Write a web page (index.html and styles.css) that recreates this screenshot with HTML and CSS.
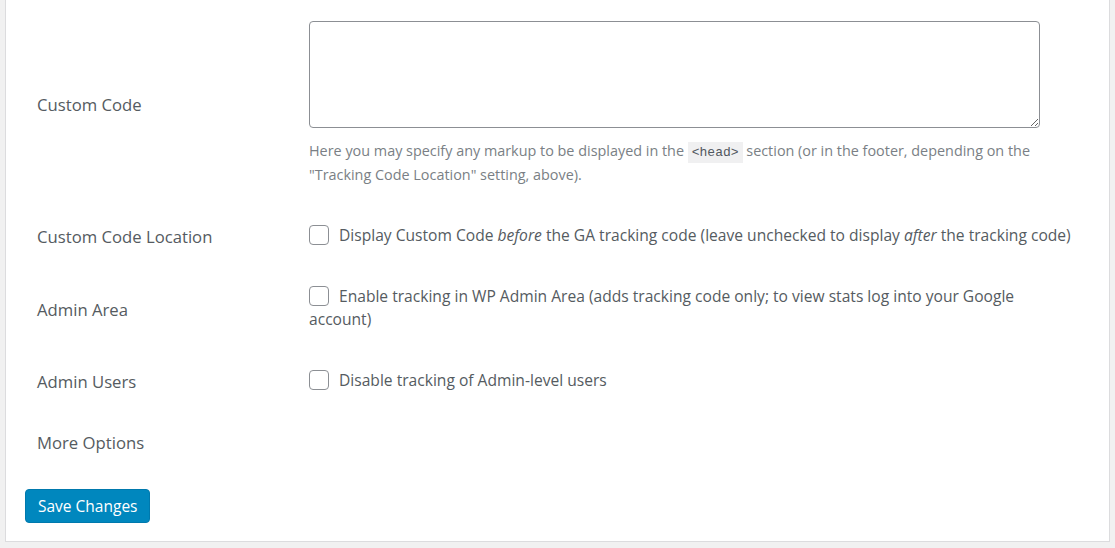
FILE: index.html
```html
<!DOCTYPE html>
<html lang="en">
<head>
<meta charset="utf-8">
<title>Settings</title>
<link rel="stylesheet" href="styles.css">
</head>
<body>
<div class="panel">
  <form class="form-table">
    <div class="row">
      <div class="label">Custom Code</div>
      <div class="field">
        <textarea class="code-box"></textarea>
        <p class="desc">Here you may specify any markup to be displayed in the <code>&lt;head&gt;</code> section (or in the footer, depending on the<br>"Tracking Code Location" setting, above).</p>
      </div>
    </div>
    <div class="row">
      <div class="label">Custom Code Location</div>
      <div class="field">
        <label class="check"><span class="box"></span>Display Custom Code <em>before</em> the GA tracking code (leave unchecked to display <em>after</em> the tracking code)</label>
      </div>
    </div>
    <div class="row">
      <div class="label">Admin Area</div>
      <div class="field">
        <label class="check"><span class="box"></span>Enable tracking in WP Admin Area (adds tracking code only; to view stats log into your Google<br>account)</label>
      </div>
    </div>
    <div class="row">
      <div class="label">Admin Users</div>
      <div class="field">
        <label class="check"><span class="box"></span>Disable tracking of Admin-level users</label>
      </div>
    </div>
    <div class="row">
      <div class="label">More Options</div>
      <div class="field"></div>
    </div>
    <div class="actions">
      <button type="button" class="btn-primary">Save Changes</button>
    </div>
  </form>
</div>
</body>
</html>
```

FILE: styles.css
```css
html, body {
  margin: 0;
  padding: 0;
}
body {
  background: #f1f1f1;
  font-family: "Open Sans", "Noto Sans", sans-serif;
  color: #50575e;
  height: 548px;
  overflow: hidden;
}
.panel {
  margin: 0 5px;
  background: #fff;
  border: 1px solid #dcdcde;
  border-top: none;
  height: 542px;
  box-sizing: border-box;
  padding: 2px 24px 0 31px;
}
.row {
  display: grid;
  grid-template-columns: 272px 1fr;
  align-items: center;
}
.label {
  font-size: 16.7px;
  line-height: 23px;
  padding: 20px 0 18px;
  color: #555b61;
}
.field {
  padding: 19px 0;
  font-size: 15.6px;
  line-height: 23px;
}
.code-box {
  display: block;
  width: 731px;
  height: 107px;
  box-sizing: border-box;
  border: 1px solid #8c8f94;
  border-radius: 4px;
  margin: 0;
  padding: 4px 8px;
  font-family: inherit;
}
.desc {
  margin: 12px 0 0;
  font-size: 14.4px;
  line-height: 22px;
  color: #7a7f85;
}
code {
  font-family: "Liberation Mono", "DejaVu Sans Mono", monospace;
  font-size: 13px;
  background: #f0f0f1;
  color: #50575e;
  padding: 3px 4px;
}
.check {
  display: block;
  color: #555b61;
}
.box {
  display: inline-block;
  width: 20px;
  height: 20px;
  box-sizing: border-box;
  border: 1px solid #8c8f94;
  border-radius: 4px;
  background: #fff;
  vertical-align: -4px;
  margin-right: 10px;
}
.actions {
  padding-top: 17px;
  margin-left: -12px;
}
.btn-primary {
  font-family: inherit;
  font-size: 15.5px;
  color: #fff;
  background: #0087be;
  border: 1px solid #0079ad;
  border-radius: 4px;
  height: 34px;
  padding: 0 12px;
  cursor: pointer;
}
```
